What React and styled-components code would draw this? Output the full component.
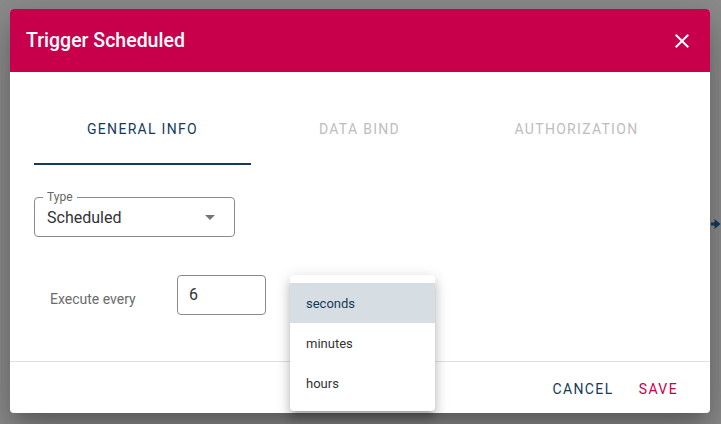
import React from "react";
import styled, { createGlobalStyle } from "styled-components";

const navy = "#163a59";
const crimson = "#c8004c";

const GlobalStyle = createGlobalStyle`
  html, body {
    margin: 0;
    padding: 0;
    background: #8c8c8c;
    font-family: Roboto, "Liberation Sans", Arial, sans-serif;
  }
  * { box-sizing: border-box; }
`;

const Backdrop = styled.div`
  position: relative;
  width: 721px;
  height: 424px;
  overflow: hidden;
  background: #8c8c8c;
  padding: 9px 0 0 10px;
`;

const Dialog = styled.div`
  width: 700px;
  height: 404px;
  background: #fff;
  border-radius: 4px;
  overflow: hidden;
  display: flex;
  flex-direction: column;
  box-shadow: 0 11px 15px -7px rgba(0, 0, 0, 0.2),
    0 24px 38px 3px rgba(0, 0, 0, 0.14), 0 9px 46px 8px rgba(0, 0, 0, 0.12);
`;

const Header = styled.header`
  height: 63px;
  flex-shrink: 0;
  background: ${crimson};
  display: flex;
  align-items: center;
  justify-content: space-between;
  padding: 0 16px 0 16px;
`;

const Title = styled.h2`
  margin: 0;
  color: #fff;
  font-size: 19.5px;
  font-weight: 500;
  letter-spacing: 0;
`;

const CloseButton = styled.button`
  border: none;
  background: none;
  padding: 0;
  width: 24px;
  height: 24px;
  display: flex;
  color: #fff;
  cursor: pointer;
`;

const Tabs = styled.nav`
  margin: 21px 25px 0 24px;
  display: grid;
  grid-template-columns: repeat(3, 1fr);
  height: 72px;
`;

const Tab = styled.div`
  display: flex;
  align-items: center;
  justify-content: center;
  padding-top: 2px;
  font-size: 14px;
  font-weight: 400;
  letter-spacing: 1.3px;
  color: ${(p) => (p.$active ? navy : "#bdbdbd")};
  border-bottom: 2px solid ${(p) => (p.$active ? navy : "transparent")};
`;

const Content = styled.section`
  flex: 1;
  padding: 32px 24px 0 24px;
  display: flex;
  flex-direction: column;
  gap: 38px;
`;

const SelectBox = styled.div`
  position: relative;
  width: 201px;
  height: 40px;
  padding: 0 12px;
  border: 1px solid #8a8a8a;
  border-radius: 4px;
  display: flex;
  align-items: center;
  justify-content: space-between;
`;

const FloatingLabel = styled.span`
  position: absolute;
  top: -8px;
  left: 8px;
  padding: 0 4px;
  background: #fff;
  font-size: 12px;
  line-height: 14px;
  color: #666;
`;

const SelectValue = styled.span`
  font-size: 16px;
  color: #333;
`;

const Caret = styled.span`
  width: 0;
  height: 0;
  border-left: 5px solid transparent;
  border-right: 5px solid transparent;
  border-top: 5px solid #757575;
  margin-right: 7px;
`;

const ExecuteRow = styled.div`
  display: flex;
  align-items: center;
  padding-left: 16px;
`;

const RowLabel = styled.span`
  width: 127px;
  font-size: 14px;
  color: #6b6b6b;
  margin-top: 7px;
`;

const NumberBox = styled.div`
  width: 89px;
  height: 40px;
  border: 1px solid #8a8a8a;
  border-radius: 4px;
  padding: 0 12px 2px 11px;
  display: flex;
  align-items: center;
  font-size: 16px;
  color: #333;
`;

const Footer = styled.footer`
  border-top: 1px solid #e0e0e0;
  height: 52px;
  flex-shrink: 0;
  display: flex;
  align-items: center;
  justify-content: flex-end;
  gap: 9px;
  padding: 2px 24px 0 0;
`;

const TextButton = styled.button`
  border: none;
  background: none;
  padding: 6px 8px;
  font-family: inherit;
  font-size: 14px;
  font-weight: 400;
  letter-spacing: 1.4px;
  color: ${(p) => p.$color};
  cursor: pointer;
`;

const Menu = styled.ul`
  position: absolute;
  left: 290px;
  top: 275px;
  width: 145px;
  margin: 0;
  padding: 8px 0;
  list-style: none;
  background: #fff;
  border-radius: 4px;
  box-shadow: 0 5px 5px -3px rgba(0, 0, 0, 0.2), 0 8px 10px 1px rgba(0, 0, 0, 0.14),
    0 3px 14px 2px rgba(0, 0, 0, 0.12);
`;

const MenuItem = styled.li`
  height: 40px;
  display: flex;
  align-items: center;
  padding: 1px 0 0 16px;
  font-size: 13px;
  font-weight: 400;
  color: ${(p) => (p.$selected ? navy : "#333")};
  background: ${(p) => (p.$selected ? "#d6dde3" : "transparent")};
`;

const EdgeArrow = styled.svg`
  position: absolute;
  left: 711px;
  top: 219px;
`;

const units = ["seconds", "minutes", "hours"];

export default function App() {
  return (
    <>
      <GlobalStyle />
      <Backdrop>
        <EdgeArrow width="10" height="10" viewBox="0 0 10 10">
          <rect x="0" y="3.5" width="4" height="3" fill="#0d3352" />
          <path d="M3.5 0 L9.5 5 L3.5 10 Z" fill="#0d3352" />
        </EdgeArrow>
        <Dialog>
          <Header>
            <Title>Trigger Scheduled</Title>
            <CloseButton aria-label="close">
              <svg width="24" height="24" viewBox="0 0 24 24" fill="currentColor">
                <path d="M19 6.41L17.59 5 12 10.59 6.41 5 5 6.41 10.59 12 5 17.59 6.41 19 12 13.41 17.59 19 19 17.59 13.41 12z" />
              </svg>
            </CloseButton>
          </Header>
          <Tabs>
            <Tab $active>GENERAL INFO</Tab>
            <Tab>DATA BIND</Tab>
            <Tab>AUTHORIZATION</Tab>
          </Tabs>
          <Content>
            <SelectBox>
              <FloatingLabel>Type</FloatingLabel>
              <SelectValue>Scheduled</SelectValue>
              <Caret />
            </SelectBox>
            <ExecuteRow>
              <RowLabel>Execute every</RowLabel>
              <NumberBox>6</NumberBox>
            </ExecuteRow>
          </Content>
          <Footer>
            <TextButton $color={navy}>CANCEL</TextButton>
            <TextButton $color={crimson}>SAVE</TextButton>
          </Footer>
        </Dialog>
        <Menu>
          {units.map((u, i) => (
            <MenuItem key={u} $selected={i === 0}>
              {u}
            </MenuItem>
          ))}
        </Menu>
      </Backdrop>
    </>
  );
}
